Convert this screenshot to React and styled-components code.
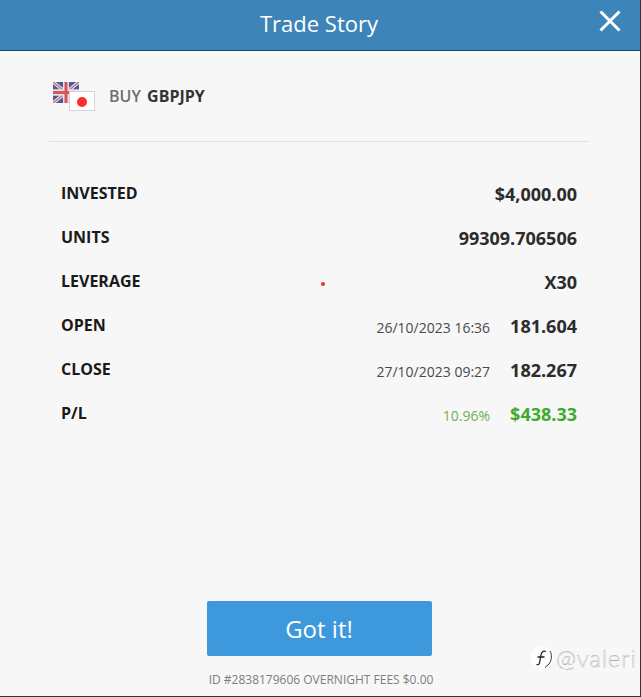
import React from "react";
import styled, { createGlobalStyle } from "styled-components";

const Global = createGlobalStyle`
  * { box-sizing: border-box; }
  html, body { margin: 0; padding: 0; background: #f7f7f7; }
  body { font-family: "Open Sans", "Liberation Sans", sans-serif; }
`;

const rows = [
  { label: "INVESTED", value: "$4,000.00" },
  { label: "UNITS", value: "99309.706506" },
  { label: "LEVERAGE", value: "X30" },
  { label: "OPEN", note: "26/10/2023 16:36", value: "181.604" },
  { label: "CLOSE", note: "27/10/2023 09:27", value: "182.267" },
  { label: "P/L", note: "10.96%", value: "$438.33", green: true },
];

const UkFlag = () => (
  <FlagUk viewBox="0 0 26 20" preserveAspectRatio="none">
    <rect width="26" height="20" fill="#4a5a9c" />
    <path d="M0 0L26 20M26 0L0 20" stroke="#dcd8de" strokeWidth="3.5" />
    <path d="M0 0L26 20M26 0L0 20" stroke="#cf6a72" strokeWidth="1.2" />
    <path d="M13 0V20M0 10H26" stroke="#e6dfe0" strokeWidth="6" />
    <path d="M13 0V20M0 10H26" stroke="#d5565c" strokeWidth="3" />
  </FlagUk>
);

const App = () => {
  return (
    <Screen>
      <Global />
      <Header>
        <Title>Trade Story</Title>
        <CloseButton aria-label="Close">
          <svg width="22" height="22" viewBox="0 0 22 22">
            <path d="M1.5 1.5L20.5 20.5M20.5 1.5L1.5 20.5" stroke="#fff" strokeWidth="3" />
          </svg>
        </CloseButton>
      </Header>

      <Body>
        <Summary>
          <Flags>
            <UkFlag />
            <FlagJp>
              <Sun />
            </FlagJp>
          </Flags>
          <Instrument>
            BUY <strong>GBPJPY</strong>
          </Instrument>
        </Summary>

        <Rows>
          {rows.map((row) => (
            <Row key={row.label}>
              <Label>{row.label}</Label>
              <Values>
                {row.note && <Note $green={row.green}>{row.note}</Note>}
                <Value $green={row.green}>{row.value}</Value>
              </Values>
            </Row>
          ))}
        </Rows>

        <Footer>
          <GotIt>Got it!</GotIt>
          <Fees>ID #2838179606 OVERNIGHT FEES $0.00</Fees>
        </Footer>
      </Body>

      <RedDot />
      <Watermark>
        <svg width="25" height="30" viewBox="0 -2 25 30">
          <path d="M12 2C5 2 1 6 1 12.500C1 19 5 22 10 22.500L9 26.500L15 22.500C20 21 23.500 17.500 23.500 12C23.500 6 19 2 12 2Z" fill="#fff" />
          <path d="M16 6.500C13 5.500 11.500 7 11 10L9.500 18C9.200 19.500 8 20 6.500 19.500M7.500 12H14.500" fill="none" stroke="#222" strokeWidth="1.300" />
          <path d="M20 6C22 9 22 15 19 19L15 22.500" fill="none" stroke="#333" strokeWidth="1" />
        </svg>
        <span>@valeri</span>
      </Watermark>
    </Screen>
  );
};

const Screen = styled.div`
  position: relative;
  width: 641px;
  height: 697px;
  display: flex;
  flex-direction: column;
  background: #f7f7f7;
  border-right: 1px solid #333;
  border-bottom: 1px solid #333;
  overflow: hidden;
`;

const Header = styled.header`
  position: relative;
  flex: none;
  height: 51px;
  display: flex;
  align-items: center;
  justify-content: center;
  padding: 0 2px 4px 0;
  background: #3d85b8;
  border-bottom: 1px solid #0f4a73;
`;

const Title = styled.h1`
  margin: 0;
  font-size: 22px;
  font-weight: 400;
  color: #fff;
`;

const CloseButton = styled.button`
  position: absolute;
  top: 10px;
  right: 19px;
  display: flex;
  padding: 0;
  border: 0;
  background: none;
`;

const Body = styled.main`
  flex: 1;
  display: flex;
  flex-direction: column;
  padding: 0 51px 0 49px;
`;

const Summary = styled.div`
  height: 91px;
  display: flex;
  align-items: flex-start;
  padding: 31px 0 0 4px;
  border-bottom: 1px solid #e0e0e0;
`;

const Flags = styled.div`
  position: relative;
  width: 56px;
  height: 29px;
`;

const FlagUk = styled.svg`
  display: block;
  width: 26px;
  height: 21px;
  filter: blur(0.5px);
`;

const FlagJp = styled.div`
  position: absolute;
  left: 16px;
  top: 9px;
  width: 26px;
  height: 20px;
  display: flex;
  align-items: center;
  justify-content: center;
  background: #fff;
  border: 1px solid #d4d4d4;
`;

const Sun = styled.span`
  width: 10px;
  height: 10px;
  margin-top: 1px;
  border-radius: 50%;
  background: #fb2d2d;
`;

const Instrument = styled.div`
  margin-top: 4px;
  font-size: 16px;
  font-weight: 600;
  line-height: 20px;
  word-spacing: 2px;
  color: #6f6f6f;
  strong {
    font-weight: 700;
    color: #333;
  }
`;

const Rows = styled.div`
  display: flex;
  flex-direction: column;
  padding: 40px 12px 0;
`;

const Row = styled.div`
  height: 44px;
  display: flex;
  justify-content: space-between;
`;

const Label = styled.div`
  font-size: 16px;
  font-weight: 700;
  line-height: 22px;
  color: #1a1a1a;
`;

const Values = styled.div`
  display: flex;
  align-items: baseline;
  gap: 20px;
  margin-top: 1px;
`;

const Note = styled.span`
  font-size: 14px;
  color: ${({ $green }) => ($green ? "#6db24f" : "#4a4a4a")};
`;

const Value = styled.span`
  font-size: 18px;
  font-weight: 700;
  line-height: 22px;
  color: ${({ $green }) => ($green ? "#3eaa2e" : "#2c2c2c")};
`;

const Footer = styled.div`
  margin-top: auto;
  display: flex;
  flex-direction: column;
  align-items: center;
  padding-bottom: 8px;
`;

const GotIt = styled.button`
  width: 225px;
  height: 55px;
  border: 0;
  border-radius: 2px;
  background: #3d99dc;
  color: #fff;
  font-family: inherit;
  font-size: 24px;
  font-weight: 400;
`;

const Fees = styled.div`
  margin-top: 16px;
  padding-left: 4px;
  font-size: 12px;
  line-height: 16px;
  color: #7d7d7d;
`;

const RedDot = styled.span`
  position: absolute;
  left: 321px;
  top: 282px;
  width: 4px;
  height: 4px;
  border-radius: 50%;
  background: #ee2a3c;
`;

const Watermark = styled.div`
  position: absolute;
  left: 530px;
  top: 643px;
  display: flex;
  align-items: center;
  gap: 1px;
  font-family: "Lato", sans-serif;
  font-size: 24px;
  font-weight: 300;
  letter-spacing: 0.8px;
  line-height: 30px;
  color: #fdfdfd;
  -webkit-text-stroke: 0.25px #777;
`;

export default App;
